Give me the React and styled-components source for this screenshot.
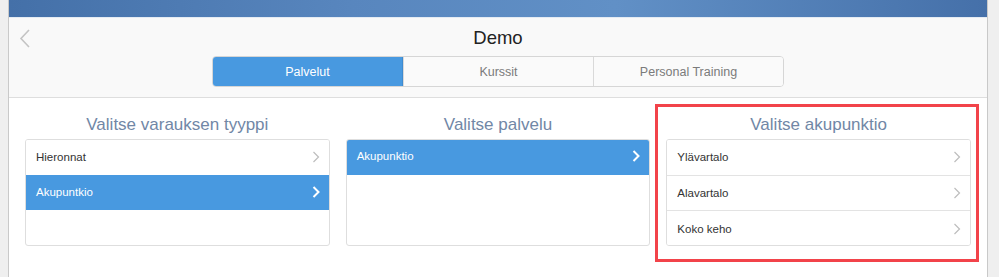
import React from "react";
import styled, { createGlobalStyle } from "styled-components";

const Global = createGlobalStyle`
  html, body { margin: 0; padding: 0; background: #efefef; }
  body { font-family: "Liberation Sans", Arial, sans-serif; }
  * { box-sizing: border-box; }
`;

const Page = styled.div`
  padding-left: 8px;
  width: 999px;
  height: 277px;
  overflow: hidden;
`;

const AppFrame = styled.div`
  width: 980px;
  height: 277px;
  border-left: 1px solid #c9c9c9;
  border-right: 1px solid #c9c9c9;
  background: #ffffff;
  display: flex;
  flex-direction: column;
`;

const TopBar = styled.div`
  height: 18px;
  background: linear-gradient(to right, #4470a8 0%, #5886be 35%, #6190c6 62%, #4570a9 100%);
  border-bottom: 1px solid #e4ebf3;
`;

const Header = styled.header`
  background: #f9f9f9;
  border-bottom: 1px solid #dedede;
  padding: 9px 0 10px;
  display: flex;
  flex-direction: column;
  align-items: center;
`;

const TitleRow = styled.div`
  width: 100%;
  height: 22px;
  display: grid;
  grid-template-columns: 1fr auto 1fr;
  align-items: center;
`;

const BackButton = styled.button`
  justify-self: start;
  margin-left: 10px;
  padding: 0;
  border: 0;
  background: none;
  width: 12px;
  height: 20px;
  display: flex;
  align-items: center;
  justify-content: center;
`;

const PageTitle = styled.h1`
  margin: 0;
  font-size: 18.5px;
  line-height: 22px;
  font-weight: normal;
  color: #222;
`;

const Segmented = styled.div`
  margin-top: 7px;
  width: 572px;
  height: 31px;
  display: grid;
  grid-template-columns: 1fr 1fr 1fr;
  border: 1px solid #d6d6d6;
  border-radius: 4px;
  overflow: hidden;
  background: #fafafa;
`;

const Segment = styled.div`
  display: flex;
  align-items: center;
  justify-content: center;
  font-size: 12.5px;
  color: ${(p) => (p.$active ? "#ffffff" : "#7b7b7b")};
  background: ${(p) => (p.$active ? "#4899e0" : "#fafafa")};
  border-left: ${(p) => (p.$first ? "none" : "1px solid #d9d9d9")};
  box-shadow: ${(p) => (p.$active ? "inset 0 0 0 1px #3f8bd0" : "none")};
  margin: ${(p) => (p.$active ? "-1px 0 -1px -1px" : "0")};
`;

const Content = styled.main`
  padding: 6px 8px 0;
  display: grid;
  grid-template-columns: 1fr 1fr 1fr;
`;

const Column = styled.section`
  padding: 11px 8px 16px;
  outline: ${(p) => (p.$highlight ? "3px solid #f2434a" : "none")};
  outline-offset: ${(p) => (p.$highlight ? "-3px" : "0")};
  margin-left: ${(p) => (p.$highlight ? "-3px" : "0")};
  padding-left: ${(p) => (p.$highlight ? "11px" : "8px")};
`;

const ColumnTitle = styled.h2`
  margin: 0 0 4px;
  text-align: center;
  font-size: 17px;
  line-height: 20px;
  font-weight: normal;
  color: #7187a6;
`;

const List = styled.ul`
  list-style: none;
  margin: 0;
  padding: 0;
  height: 107px;
  background: #fff;
  border: 1px solid #dedede;
  border-radius: 3px;
  overflow: hidden;
`;

const Row = styled.li`
  height: 35.5px;
  display: flex;
  align-items: center;
  justify-content: space-between;
  padding: 0 9px 0 10px;
  font-size: 11.5px;
  color: ${(p) => (p.$selected ? "#ffffff" : "#333333")};
  background: ${(p) => (p.$selected ? "#4899e0" : "#ffffff")};
  border-bottom: 1px solid ${(p) => (p.$selected ? "#4899e0" : "#e3e3e3")};
  margin: ${(p) => (p.$selected ? "-1px -1px 0" : "0")};
  padding-left: ${(p) => (p.$selected ? "11px" : "10px")};
  padding-right: ${(p) => (p.$selected ? "10px" : "9px")};
  &:last-child { border-bottom: ${(p) => (p.$full ? "none" : undefined)}; }
`;

const Chevron = ({ selected }) => (
  <svg width="8" height="12" viewBox="0 0 8 12">
    <polyline
      points="1.5,1 6.5,6 1.5,11"
      fill="none"
      stroke={selected ? "#ffffff" : "#bdbdbd"}
      strokeWidth={selected ? 2 : 1.2}
    />
  </svg>
);

const BackChevron = () => (
  <svg width="12" height="19" viewBox="0 0 12 19">
    <polyline points="10,1 2,9.5 10,18" fill="none" stroke="#c4c4c4" strokeWidth="1.6" />
  </svg>
);

const columns = [
  {
    title: "Valitse varauksen tyyppi",
    items: [
      { label: "Hieronnat" },
      { label: "Akupuntkio", selected: true },
    ],
  },
  {
    title: "Valitse palvelu",
    items: [{ label: "Akupunktio", selected: true }],
  },
  {
    title: "Valitse akupunktio",
    highlight: true,
    items: [{ label: "Ylävartalo" }, { label: "Alavartalo" }, { label: "Koko keho" }],
  },
];

export default function App() {
  return (
    <Page>
      <Global />
      <AppFrame>
        <TopBar />
        <Header>
          <TitleRow>
            <BackButton aria-label="Takaisin">
              <BackChevron />
            </BackButton>
            <PageTitle>Demo</PageTitle>
            <span />
          </TitleRow>
          <Segmented>
            <Segment $active $first>Palvelut</Segment>
            <Segment>Kurssit</Segment>
            <Segment>Personal Training</Segment>
          </Segmented>
        </Header>
        <Content>
          {columns.map((col) => (
            <Column key={col.title} $highlight={col.highlight}>
              <ColumnTitle>{col.title}</ColumnTitle>
              <List>
                {col.items.map((it) => (
                  <Row key={it.label} $selected={it.selected} $full={col.items.length === 3}>
                    <span>{it.label}</span>
                    <Chevron selected={it.selected} />
                  </Row>
                ))}
              </List>
            </Column>
          ))}
        </Content>
      </AppFrame>
    </Page>
  );
}
